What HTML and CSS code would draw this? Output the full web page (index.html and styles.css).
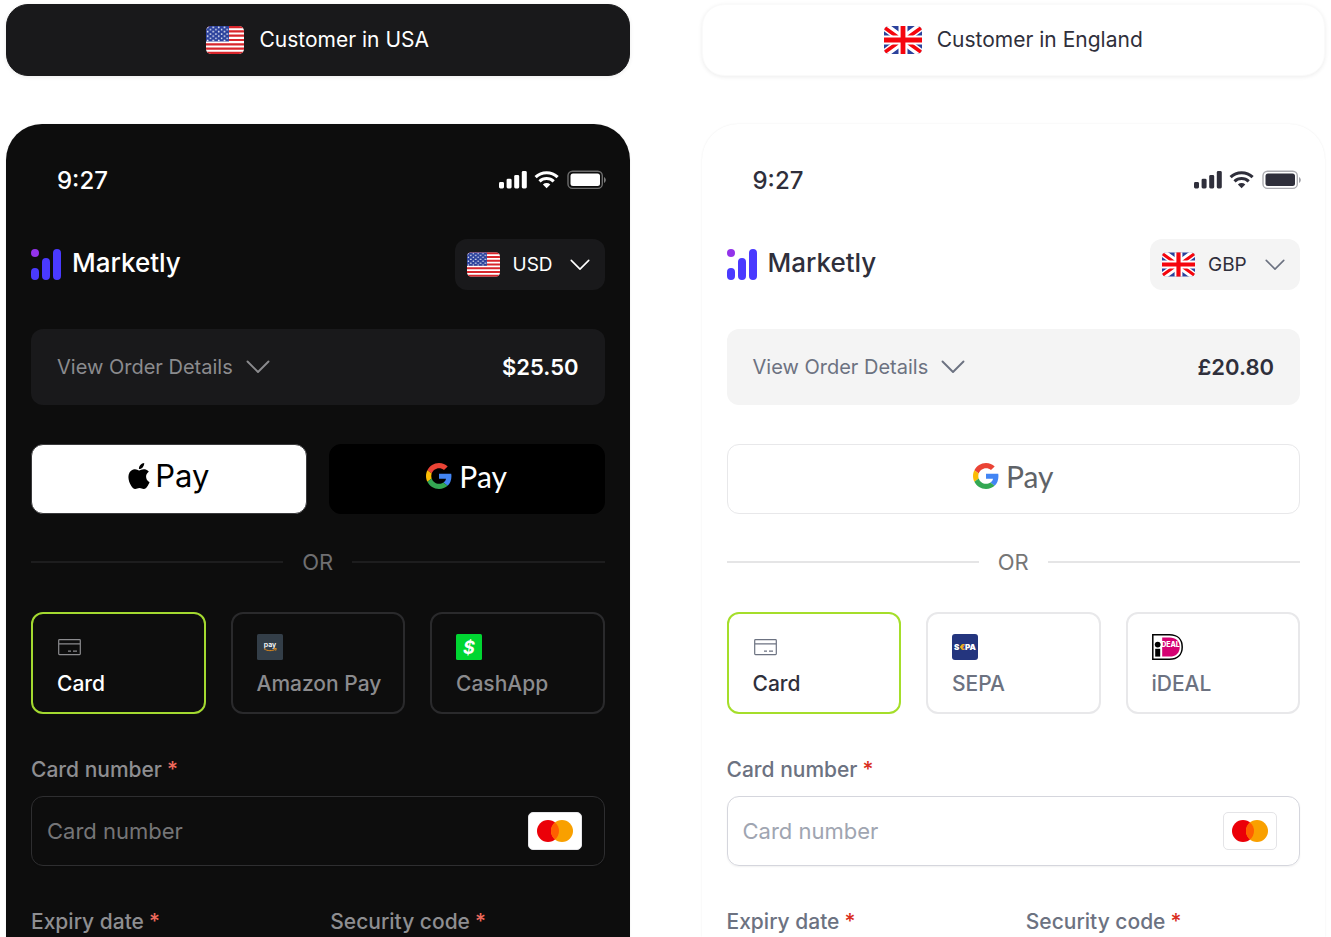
FILE: index.html
```html
<!DOCTYPE html>
<html lang="en">
<head>
<meta charset="utf-8">
<title>Marketly checkout</title>
<link rel="stylesheet" href="styles.css">
</head>
<body>
<svg class="defs" aria-hidden="true">
  <defs>
    <clipPath id="flag-clip"><rect width="38" height="28" rx="5"/></clipPath>
    <pattern id="stars" width="5.6" height="4.4" patternUnits="userSpaceOnUse">
      <circle cx="1.6" cy="1.4" r=".85" fill="#fff"/>
      <circle cx="4.4" cy="3.6" r=".85" fill="#fff"/>
    </pattern>
  </defs>
  <symbol id="flag-us" viewBox="0 0 38 28">
    <g clip-path="url(#flag-clip)">
      <rect width="38" height="28" fill="#fff"/>
      <path d="M0 1.1h38M0 5.4h38M0 9.7h38M0 14h38M0 18.3h38M0 22.6h38M0 26.9h38" stroke="#d8262c" stroke-width="2.2"/>
      <rect width="23" height="15.5" fill="#2b419c"/>
      <rect width="23" height="15.5" fill="url(#stars)"/>
    </g>
  </symbol>
  <symbol id="flag-gb" viewBox="0 0 38 28">
    <g clip-path="url(#flag-clip)">
      <rect width="38" height="28" fill="#2b419c"/>
      <path d="M-2 -1.5L40 29.5M40 -1.5L-2 29.5" stroke="#fff" stroke-width="8.5"/>
      <path d="M-1 .5L15 12M39 27.5L23 16M39 .5L23 12M-1 27.5L15 16" stroke="#f5050d" stroke-width="3.6"/>
      <path d="M19 0v28M0 14h38" stroke="#fff" stroke-width="9"/>
      <path d="M19 0v28M0 14h38" stroke="#f5050d" stroke-width="4.8"/>
    </g>
  </symbol>
  <symbol id="status" viewBox="0 0 107 20">
    <g fill="currentColor">
      <rect x="0" y="12" width="5" height="6.5" rx="1.4"/>
      <rect x="7.6" y="8.7" width="5" height="9.8" rx="1.4"/>
      <rect x="15.2" y="5" width="5" height="13.5" rx="1.4"/>
      <rect x="22.8" y="1" width="5" height="17.5" rx="1.4"/>
      <path d="M47.600 18.300l-3.700-3.800a5.400 5.400 0 0 1 7.400 0z"/>
      <rect x="71.500" y="3.500" width="29.500" height="12.500" rx="2.500"/>
    </g>
    <path d="M36.600 7.200a15.800 15.800 0 0 1 22 0M40.500 11.400a10.300 10.300 0 0 1 14.200 0" fill="none" stroke="currentColor" stroke-width="3.100"/>
    <rect x="69" y="1.200" width="34.300" height="17.200" rx="4.500" fill="none" stroke="currentColor" stroke-width="1.400" opacity=".4"/>
    <path d="M105 7v6c1-.5 1.800-1.600 1.800-3s-.8-2.500-1.800-3z" fill="currentColor" opacity=".45"/>
  </symbol>
  <symbol id="logo" viewBox="0 0 31 31">
    <circle cx="4" cy="4" r="4" fill="#9333ea"/>
    <path d="M4 23v4M15 13v14M26 4v23" stroke="#4a3aff" stroke-width="8" stroke-linecap="round"/>
  </symbol>
  <symbol id="chevron" viewBox="0 0 24 14">
    <path d="M1.500 1.500L12 12L22.500 1.500" fill="none" stroke="currentColor" stroke-width="1.900" stroke-linecap="round" stroke-linejoin="round"/>
  </symbol>
  <symbol id="google" viewBox="0 0 48 48">
    <path fill="#ea4335" d="M24 9.500c3.540 0 6.710 1.220 9.210 3.600l6.850-6.850C35.900 2.380 30.470 0 24 0 14.620 0 6.510 5.380 2.560 13.220l7.980 6.190C12.430 13.720 17.740 9.500 24 9.500z"/>
    <path fill="#4285f4" d="M46.980 24.550c0-1.570-.15-3.090-.38-4.550H24v9.020h12.940c-.58 2.960-2.260 5.480-4.780 7.180l7.730 6c4.510-4.180 7.090-10.360 7.090-17.650z"/>
    <path fill="#fbbc05" d="M10.530 28.590c-.48-1.450-.76-2.990-.76-4.590s.27-3.140.76-4.590l-7.980-6.190C.92 16.460 0 20.120 0 24c0 3.880.92 7.540 2.560 10.780l7.970-6.190z"/>
    <path fill="#34a853" d="M24 48c6.480 0 11.930-2.130 15.890-5.810l-7.730-6c-2.150 1.450-4.920 2.300-8.160 2.300-6.260 0-11.570-4.220-13.470-9.910l-7.980 6.190C6.510 42.620 14.620 48 24 48z"/>
  </symbol>
  <symbol id="card" viewBox="0 0 26 26">
    <rect x="1.700" y="5.600" width="21.600" height="15" rx=".8" fill="none" stroke="currentColor" stroke-width="1.200"/>
    <path d="M2 9.800h21M11 17.200h3M16 17.200h4" fill="none" stroke="currentColor" stroke-width="1.200"/>
  </symbol>
  <symbol id="mastercard" viewBox="0 0 36 22">
    <circle cx="11" cy="11" r="11" fill="#eb0008"/>
    <circle cx="25" cy="11" r="11" fill="#f9a000"/>
    <path d="M18 2.500a11 11 0 0 1 0 17a11 11 0 0 1 0-17z" fill="#ff5f00"/>
  </symbol>
</svg>

<main class="page">
  <section class="column dark">
    <h2 class="banner"><svg class="flag"><use href="#flag-us"/></svg>Customer in USA</h2>
    <div class="phone">
      <div class="status"><span>9:27</span><svg class="status-icons"><use href="#status"/></svg></div>
      <div class="content">
        <header class="header">
          <div class="brand"><svg class="logo"><use href="#logo"/></svg><span>Marketly</span></div>
          <div class="currency">
            <svg class="flag-small"><use href="#flag-us"/></svg>
            <select aria-label="Currency"><option>USD</option></select>
            <svg class="chevron-small"><use href="#chevron"/></svg>
          </div>
        </header>
        <button class="order" type="button"><span class="order-label">View Order Details<svg class="chevron"><use href="#chevron"/></svg></span><strong>$25.50</strong></button>
        <div class="wallets">
          <button class="wallet apple" type="button">
            <svg class="apple-icon" viewBox="2 0 20 24"><path fill="currentColor" d="M12.152 6.896c-.948 0-2.415-1.078-3.960-1.040-2.040.027-3.910 1.183-4.961 3.014-2.117 3.675-.546 9.103 1.519 12.090 1.013 1.454 2.208 3.090 3.792 3.039 1.520-.065 2.090-.987 3.935-.987 1.831 0 2.350.987 3.960.948 1.637-.026 2.676-1.480 3.676-2.948 1.156-1.688 1.636-3.325 1.662-3.415-.039-.013-3.182-1.221-3.220-4.857-.026-3.040 2.480-4.494 2.597-4.559-1.429-2.090-3.623-2.324-4.390-2.376-2-.156-3.675 1.090-4.610 1.090zM15.530 3.830c.843-1.012 1.400-2.427 1.245-3.830-1.207.052-2.662.805-3.532 1.818-.78.896-1.454 2.338-1.273 3.714 1.338.104 2.715-.688 3.559-1.701"/></svg>Pay
          </button>
          <button class="wallet gpay" type="button"><svg class="google-icon"><use href="#google"/></svg>Pay</button>
        </div>
        <div class="divider">OR</div>
        <div class="methods">
          <label class="method"><input type="radio" name="us-method" checked><svg class="method-icon"><use href="#card"/></svg>Card</label>
          <label class="method"><input type="radio" name="us-method">
            <svg class="method-icon" viewBox="0 0 26 26"><rect width="26" height="26" rx="1.500" fill="#333e48"/><text x="13" y="13" text-anchor="middle" class="amazon-text">pay</text><path d="M7 14.800c3.500 2.400 8.200 2.400 11.500.4M16.800 14.600l2.500-.1-.6 2.200" fill="none" stroke="#e08a1e" stroke-width="1"/></svg>Amazon Pay</label>
          <label class="method"><input type="radio" name="us-method">
            <svg class="method-icon" viewBox="0 0 26 26"><rect width="26" height="26" rx="1.500" fill="#00d632"/><text x="13" y="19.500" text-anchor="middle" class="cash-text">$</text></svg>CashApp</label>
        </div>
        <div class="field">
          <label for="us-number">Card number <span class="required">*</span></label>
          <div class="input-box"><input id="us-number" type="text" placeholder="Card number"><span class="network"><svg><use href="#mastercard"/></svg></span></div>
        </div>
        <div class="pair">
          <div class="field"><label for="us-expiry">Expiry date<span class="required">*</span></label><div class="input-box"><input id="us-expiry" type="text"></div></div>
          <div class="field"><label for="us-code">Security code<span class="required">*</span></label><div class="input-box"><input id="us-code" type="text"></div></div>
        </div>
      </div>
    </div>
  </section>

  <section class="column light">
    <h2 class="banner"><svg class="flag"><use href="#flag-gb"/></svg>Customer in England</h2>
    <div class="phone">
      <div class="status"><span>9:27</span><svg class="status-icons"><use href="#status"/></svg></div>
      <div class="content">
        <header class="header">
          <div class="brand"><svg class="logo"><use href="#logo"/></svg><span>Marketly</span></div>
          <div class="currency">
            <svg class="flag-small"><use href="#flag-gb"/></svg>
            <select aria-label="Currency"><option>GBP</option></select>
            <svg class="chevron-small"><use href="#chevron"/></svg>
          </div>
        </header>
        <button class="order" type="button"><span class="order-label">View Order Details<svg class="chevron"><use href="#chevron"/></svg></span><strong>£20.80</strong></button>
        <div class="wallets">
          <button class="wallet gpay" type="button"><svg class="google-icon"><use href="#google"/></svg>Pay</button>
        </div>
        <div class="divider">OR</div>
        <div class="methods">
          <label class="method"><input type="radio" name="gb-method" checked><svg class="method-icon"><use href="#card"/></svg>Card</label>
          <label class="method"><input type="radio" name="gb-method">
            <svg class="method-icon" viewBox="0 0 26 26"><rect width="26" height="26" rx="3" fill="#24357e"/><text x="13" y="16" text-anchor="middle" class="sepa-text">S<tspan fill="#f5b21a">€</tspan>PA</text></svg>SEPA</label>
          <label class="method"><input type="radio" name="gb-method">
            <svg class="method-icon ideal-icon" viewBox="0 0 31 26"><path d="M.8.800h16.700c8 0 12.700 4.700 12.700 12.200s-4.700 12.200-12.700 12.200H.800z" fill="#fff" stroke="#000" stroke-width="1.500"/><path d="M10.200 3.400h7.300c6.500 0 10.200 3.600 10.200 9.600s-3.700 9.600-10.200 9.600h-7.300z" fill="#d50172"/><circle cx="5.700" cy="10.600" r="2.900"/><path d="M3.200 14.800h5v7.800h-5z"/><text x="18.500" y="13" text-anchor="middle" class="ideal-text">DEAL</text></svg>iDEAL</label>
        </div>
        <div class="field">
          <label for="gb-number">Card number <span class="required">*</span></label>
          <div class="input-box"><input id="gb-number" type="text" placeholder="Card number"><span class="network"><svg><use href="#mastercard"/></svg></span></div>
        </div>
        <div class="pair">
          <div class="field"><label for="gb-expiry">Expiry date<span class="required">*</span></label><div class="input-box"><input id="gb-expiry" type="text"></div></div>
          <div class="field"><label for="gb-code">Security code<span class="required">*</span></label><div class="input-box"><input id="gb-code" type="text"></div></div>
        </div>
      </div>
    </div>
  </section>
</main>
</body>
</html>
```

FILE: styles.css
```css
* { box-sizing: border-box; }

body {
  margin: 0;
  height: 100vh;
  overflow: hidden;
  background: #fff;
  font-family: Inter, "Liberation Sans", sans-serif;
}

svg { display: block; flex: none; }
.defs { position: absolute; width: 0; height: 0; }
button, input, select { font: inherit; color: inherit; }

.dark {
  --text: #fff;
  --muted: #8b8b8e;
  --label: #8e8e91;
  --or: #6f6f71;
  --placeholder: #757577;
  --phone: #0d0d0d;
  --panel: #19191b;
  --banner: #19191b;
  --banner-edge: #19191b;
  --line: #1d1d1e;
  --border: #2a2a2c;
  --field-border: #2e2e30;
  --required: #ee6a5c;
  --chevron: #fff;
  --gpay: #000;
  --gpay-border: #000;
  --gpay-text: #fff;
  --accent: #a3d930;
}

.light {
  --text: #2f2f3b;
  --muted: #6c7281;
  --label: #6c7281;
  --or: #767676;
  --placeholder: #a0a5b1;
  --phone: #fff;
  --panel: #f4f4f4;
  --banner: #fff;
  --banner-edge: #fafafa;
  --line: #e5e5e6;
  --border: #e8e8ea;
  --field-border: #d5d6dd;
  --required: #d92d20;
  --chevron: #6c7281;
  --gpay: #fff;
  --gpay-border: #e8e8ea;
  --gpay-text: #5f6368;
  --accent: #a5de2a;
}

.page {
  display: grid;
  grid-template-columns: repeat(2, minmax(0, 1fr));
  gap: 72px;
  height: 100vh;
  padding: 4px 6px 0;
}

.column {
  display: flex;
  flex-direction: column;
  gap: 48px;
  min-height: 0;
  color: var(--text);
}

.banner {
  display: flex;
  align-items: center;
  justify-content: center;
  gap: 15px;
  margin: 0;
  padding: 20px;
  border: 1px solid var(--banner-edge);
  border-radius: 22px;
  background: var(--banner);
  box-shadow: 0 1px 4px rgba(0, 0, 0, 0.08);
  font-size: 21px;
  line-height: 30px;
  font-weight: 400;
}

.flag { width: 38px; height: 28px; }

.phone {
  flex: 1;
  min-height: 0;
  overflow: hidden;
  border-radius: 36px 36px 0 0;
  background: var(--phone);
  box-shadow: 0 0 2px rgba(0, 0, 0, 0.08);
}

.status {
  display: flex;
  align-items: center;
  justify-content: space-between;
  padding: 44px 24px 0 51px;
  font-size: 24px;
  line-height: 26px;
  font-weight: 500;
}

.status-icons { width: 107px; height: 20px; margin-bottom: 2px; }

.content { padding: 45px 25px 24px; }

.header {
  display: flex;
  align-items: center;
  justify-content: space-between;
}

.brand {
  display: flex;
  align-items: flex-start;
  gap: 10px;
  font-size: 26px;
  line-height: 28px;
  font-weight: 500;
}

.logo { width: 31px; height: 31px; }

.currency {
  display: flex;
  align-items: center;
  gap: 13px;
  padding: 13px 15px 13px 12px;
  border-radius: 12px;
  background: var(--panel);
}

.currency select {
  width: 44px;
  padding: 0;
  border: 0;
  appearance: none;
  background: none;
  font-size: 19px;
  line-height: 25px;
}

.flag-small { width: 33px; height: 25px; }
.chevron-small { width: 20px; height: 12px; color: var(--chevron); }

.order {
  display: flex;
  align-items: center;
  justify-content: space-between;
  width: 100%;
  margin-top: 39px;
  padding: 24px 26px;
  border: 0;
  border-radius: 12px;
  background: var(--panel);
  line-height: 28px;
}

.order-label {
  display: flex;
  align-items: center;
  gap: 13px;
  color: var(--muted);
  font-size: 20px;
}

.chevron { width: 24px; height: 14px; }
.order strong { font-size: 22px; font-weight: 600; }

.wallets {
  display: flex;
  gap: 22px;
  margin-top: 39px;
}

.wallet {
  display: flex;
  flex: 1;
  align-items: center;
  justify-content: center;
  padding: 12px 14px 18px;
  border: 1px solid;
  border-radius: 12px;
  line-height: 38px;
}

.apple {
  gap: 5px;
  border-color: #3a3a3c;
  background: #fff;
  color: #000;
  font-size: 31px;
}

.gpay {
  gap: 7px;
  border-color: var(--gpay-border);
  background: var(--gpay);
  color: var(--gpay-text);
  font-family: Lato, Inter, sans-serif;
  font-size: 30px;
}

.apple-icon { width: 22px; height: 26px; }
.google-icon { width: 26px; height: 26px; }

.divider {
  display: flex;
  align-items: center;
  gap: 19px;
  margin-top: 35px;
  color: var(--or);
  font-size: 22px;
  line-height: 26px;
}

.divider::before,
.divider::after {
  content: "";
  flex: 1;
  height: 2px;
  background: var(--line);
}

.methods {
  display: grid;
  grid-template-columns: repeat(3, minmax(0, 1fr));
  gap: 25px;
  margin-top: 37px;
}

.method {
  display: flex;
  flex-direction: column;
  gap: 10px;
  padding: 20px 24px 14px;
  border: 2px solid var(--border);
  border-radius: 12px;
  color: var(--muted);
  font-size: 21px;
  line-height: 28px;
  font-weight: 450;
  white-space: nowrap;
}

.method:has(input:checked) {
  border-color: var(--accent);
  color: var(--text);
}

.method input {
  position: absolute;
  margin: 0;
  opacity: 0;
}

.method-icon { width: 26px; height: 26px; color: var(--muted); }
.ideal-icon { width: 31px; }

.amazon-text { fill: #fff; font-size: 7px; font-weight: 600; }
.cash-text { fill: #fff; font-size: 18px; font-weight: 700; font-style: italic; }
.sepa-text { fill: #fff; font-size: 8px; font-weight: 900; }
.ideal-text { fill: #fff; font-size: 7px; font-weight: 800; }

.field { margin-top: 42px; }

.field label {
  display: flex;
  gap: 5px;
  margin-bottom: 12px;
  color: var(--label);
  font-size: 21px;
  line-height: 28px;
  font-weight: 450;
}

.required { color: var(--required); font-weight: 500; }

.input-box {
  display: flex;
  align-items: center;
  height: 70px;
  padding: 0 22px 0 15px;
  border: 1px solid var(--field-border);
  border-radius: 12px;
  box-shadow: 0 1px 2px rgba(0, 0, 0, 0.06);
}

.input-box input {
  flex: 1;
  min-width: 0;
  padding: 0;
  border: 0;
  outline: 0;
  background: none;
  font-size: 22px;
  line-height: 28px;
}

.input-box input::placeholder { color: var(--placeholder); opacity: 1; }

.network {
  padding: 7px 8px;
  border: 1px solid #e4e4e7;
  border-radius: 5px;
  background: #fff;
}

.network svg { width: 36px; height: 22px; }

.pair {
  display: grid;
  grid-template-columns: repeat(2, minmax(0, 1fr));
  gap: 25px;
}
```
